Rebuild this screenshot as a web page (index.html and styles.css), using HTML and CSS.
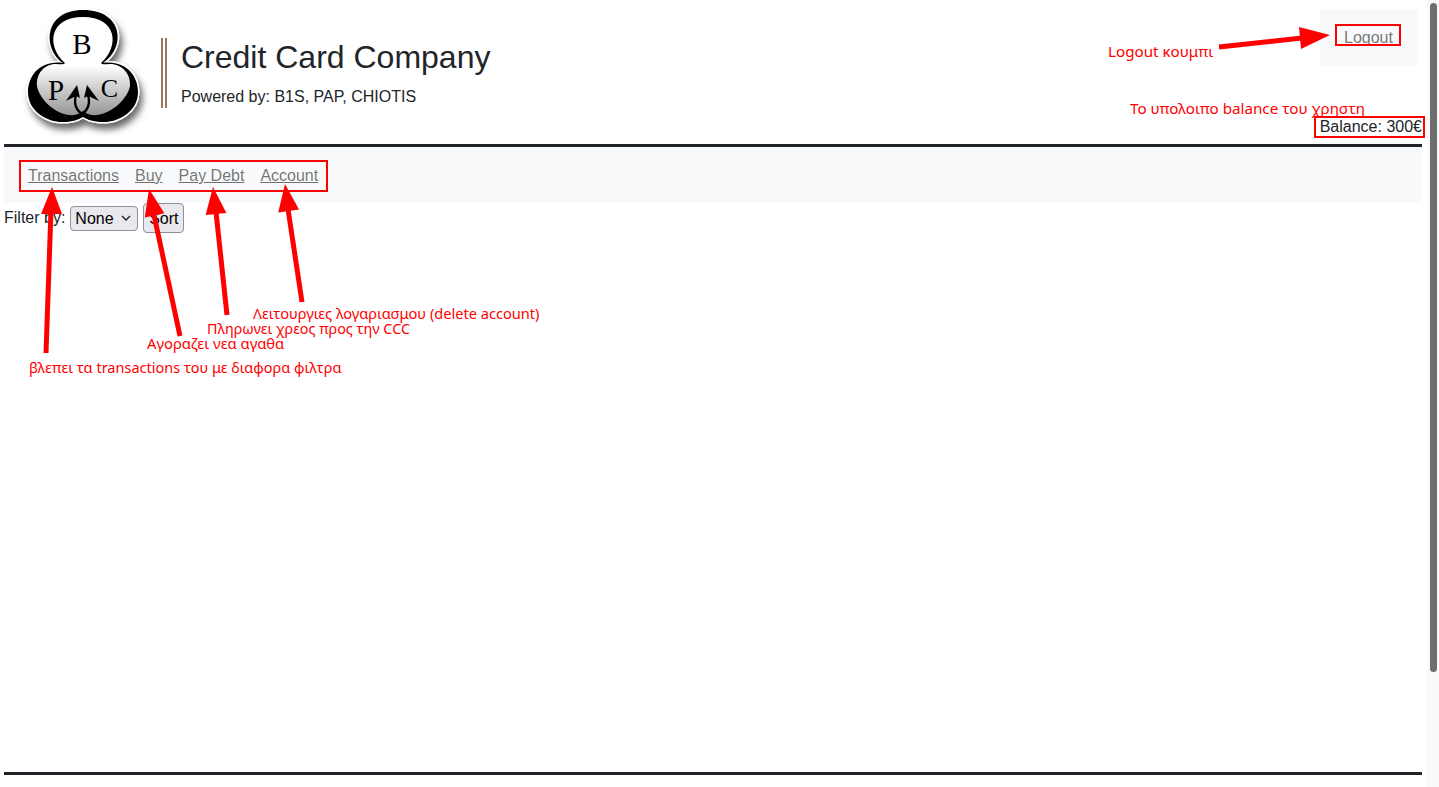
FILE: index.html
```html
<!DOCTYPE html>
<html lang="en">
<head>
<meta charset="utf-8">
<title>Credit Card Company</title>
<link rel="stylesheet" href="styles.css">
</head>
<body>
<div class="page">
  <header class="top">
    <svg class="logo" viewBox="20 0 130 140" width="130" height="140" aria-label="BPC logo">
      <defs>
        <linearGradient id="lobe" gradientUnits="userSpaceOnUse" x1="0" y1="17" x2="0" y2="118">
          <stop offset="0" stop-color="#ffffff"/>
          <stop offset="0.48" stop-color="#ffffff"/>
          <stop offset="1" stop-color="#8f8f8f"/>
        </linearGradient>
        <filter id="shade" x="-20%" y="-20%" width="150%" height="150%">
          <feDropShadow dx="3" dy="6" stdDeviation="3.5" flood-color="#000" flood-opacity="0.6"/>
        </filter>
      </defs>
      <path class="logo-outer" filter="url(#shade)" d="M63 63C42 48 44 10 83 10C124 10 126 48 103 63C125 60 138 75 138 92C138 112 118 122 104 122C95 122 88 120 83 117C78 120 71 122 62 122C48 122 28 112 28 92C28 75 41 60 63 63Z"/>
      <path fill="url(#lobe)" d="M65 63C46 46 49 17 83 17C117 17 120 46 101 63C102 65 106 64 110 64C122 64 131 74 130 86C128 98 112 114 96 115C90 116 86 113 83 111C80 113 76 116 70 115C54 114 39 98 37 86C36 74 44 64 56 64C60 64 64 65 65 63Z"/>
      <path class="logo-line" d="M76 95C72 108 80 114 90 119M88 95C92 108 84 114 74 119"/>
      <path d="M77 85L66 101L76 96L80 98ZM87 85L99 101L88 96L84 98Z"/>
      <text class="logo-letter" x="82" y="54" text-anchor="middle">B</text>
      <text class="logo-letter" x="56" y="100" text-anchor="middle">P</text>
      <text class="logo-letter logo-letter-c" x="109.500" y="97" text-anchor="middle">C</text>
    </svg>
    <div class="brand">
      <h1 class="brand-title">Credit Card Company</h1>
      <p class="brand-sub">Powered by: B1S, PAP, CHIOTIS</p>
    </div>
    <div class="account-side">
      <div class="logout-box"><a class="link" href="#">Logout</a></div>
      <div class="balance">Balance: 300€</div>
    </div>
  </header>
  <hr class="rule">
  <nav class="nav">
    <a class="link" href="#">Transactions</a>
    <a class="link" href="#">Buy</a>
    <a class="link" href="#">Pay Debt</a>
    <a class="link" href="#">Account</a>
  </nav>
  <main class="main">
    <form class="filter">
      <label class="filter-label" for="filter">Filter by:</label>
      <span class="select-wrap">
        <select class="filter-select" id="filter"><option>None</option></select>
        <svg class="select-chevron" viewBox="0 0 10 6" width="10" height="6" aria-hidden="true"><path d="M1 1L5 5L9 1"/></svg>
      </span>
      <button class="filter-button" type="button">Sort</button>
    </form>
  </main>
  <hr class="rule rule-foot">
</div>

<svg class="marks" viewBox="0 0 1439 787" width="1439" height="787" aria-hidden="true">
  <rect class="box" x="20" y="161" width="307" height="30"/>
  <rect class="box" x="1336" y="25" width="64" height="20"/>
  <rect class="box" x="1315" y="117" width="109" height="20"/>
  <path class="shaft" d="M46 353L51 210"/>
  <path class="head" d="M52 187L62 214L41 214Z"/>
  <path class="shaft" d="M180 336L154 215"/>
  <path class="head" d="M149 189L164.400 213.300L144.800 217.500Z"/>
  <path class="shaft" d="M227 315L216 212"/>
  <path class="head" d="M213 187L226.400 212.900L205.600 215.100Z"/>
  <path class="shaft" d="M302 302L288 209"/>
  <path class="head" d="M285 184L299 209.600L278.200 212.400Z"/>
  <path class="shaft" d="M1219 47L1302 38"/>
  <path class="head" d="M1330 35L1299 27L1301 49Z"/>
</svg>
<span class="note note-logout">Logout κουμπι</span>
<span class="note note-balance">Το υπολοιπο balance του χρηστη</span>
<span class="note note-account">Λειτουργιες λογαριασμου (delete account)</span>
<span class="note note-pay">Πληρωνει χρεος προς την CCC</span>
<span class="note note-buy">Αγοραζει νεα αγαθα</span>
<span class="note note-trans">βλεπει τα transactions του με διαφορα φιλτρα</span>

<div class="scrollbar"><div class="scrollbar-thumb"></div></div>
</body>
</html>
```
FILE: styles.css
```css
* { box-sizing: border-box; }
html, body { margin: 0; height: 100%; overflow: hidden; background: #fff; }
body {
  position: relative;
  font-family: "Liberation Sans", Arial, sans-serif;
  font-size: 16px;
  line-height: 24px;
  color: #212529;
}
.page {
  display: flex;
  flex-direction: column;
  height: 787px;
  padding: 0 17px 12px 4px;
}
.top { display: flex; height: 144px; padding-left: 16px; }
.logo { flex: none; overflow: visible; }
.logo-outer { fill: #000; stroke: #fff; stroke-width: 3; paint-order: stroke; }
.logo-line { fill: none; stroke: #000; stroke-width: 2.4; }
.logo-letter { font-family: "Liberation Serif", serif; font-weight: 400; font-size: 29px; fill: #000; }
.logo-letter-c { font-size: 26px; }
.brand {
  align-self: flex-start;
  margin: 38px 0 0 11px;
  padding-left: 14px;
  height: 70px;
  border-left: 6px double #99785e;
}
.brand-title { margin: 0; font-size: 32px; line-height: 38px; font-weight: 400; }
.brand-sub { margin: 9px 0 0; }
.account-side {
  margin-left: auto;
  display: flex;
  flex-direction: column;
  align-items: flex-end;
}
.logout-box {
  margin: 9px 5px 0 0;
  width: 97px;
  height: 56px;
  padding: 17px 0 0 24px;
  background: #f8f9fa;
}
.balance { margin-top: auto; margin-bottom: 5px; }
.link { color: rgba(0, 0, 0, .55); text-decoration: underline; }
.rule { flex: none; margin: 0; height: 3px; border: 0; background: #212529; }
.nav {
  flex: none;
  display: flex;
  gap: 16px;
  height: 56px;
  padding: 17px 24px 15px;
  background: #f8f9fa;
}
.main { flex: 1; }
.filter { display: flex; align-items: center; height: 30px; }
.filter-label { margin-right: 5px; }
.select-wrap { position: relative; display: flex; width: 68px; height: 25px; margin: 1px 5px 0 0; }
.filter-select {
  appearance: none;
  width: 100%;
  height: 100%;
  padding: 0 0 0 4px;
  font: inherit;
  line-height: 23px;
  color: #000;
  background: #e9e9ed;
  border: 1px solid #8f8f9d;
  border-radius: 4px;
}
.select-chevron { position: absolute; right: 7px; top: 9px; fill: none; stroke: #222; stroke-width: 1.4; }
.filter-button {
  width: 41px;
  height: 30px;
  padding: 1px 0 0;
  font: inherit;
  color: #000;
  background: #e9e9ed;
  border: 1px solid #8f8f9d;
  border-radius: 4px;
}
.marks { position: absolute; left: 0; top: 0; pointer-events: none; }
.box { fill: none; stroke: #f00; stroke-width: 2; }
.shaft { fill: none; stroke: #f00; stroke-width: 5; }
.head { fill: #f00; }
.note {
  position: absolute;
  font-family: "Noto Sans", sans-serif;
  font-size: 14.5px;
  line-height: 15px;
  color: #f00;
  white-space: nowrap;
}
.note-logout { left: 1108px; top: 44px; font-size: 15.2px; }
.note-balance { left: 1130px; top: 101px; font-size: 15.2px; }
.note-account { left: 253px; top: 306px; font-size: 14.6px; }
.note-pay { left: 207px; top: 321px; font-size: 14.35px; }
.note-buy { left: 147px; top: 336px; font-size: 14.8px; }
.note-trans { left: 29px; top: 360px; }
.scrollbar { position: absolute; right: 0; top: 0; bottom: 0; width: 12px; background: #fafafa; }
.scrollbar-thumb { margin: 3px 2px 0 3px; height: 669px; border-radius: 4px; background: #6e6e6e; }
```
